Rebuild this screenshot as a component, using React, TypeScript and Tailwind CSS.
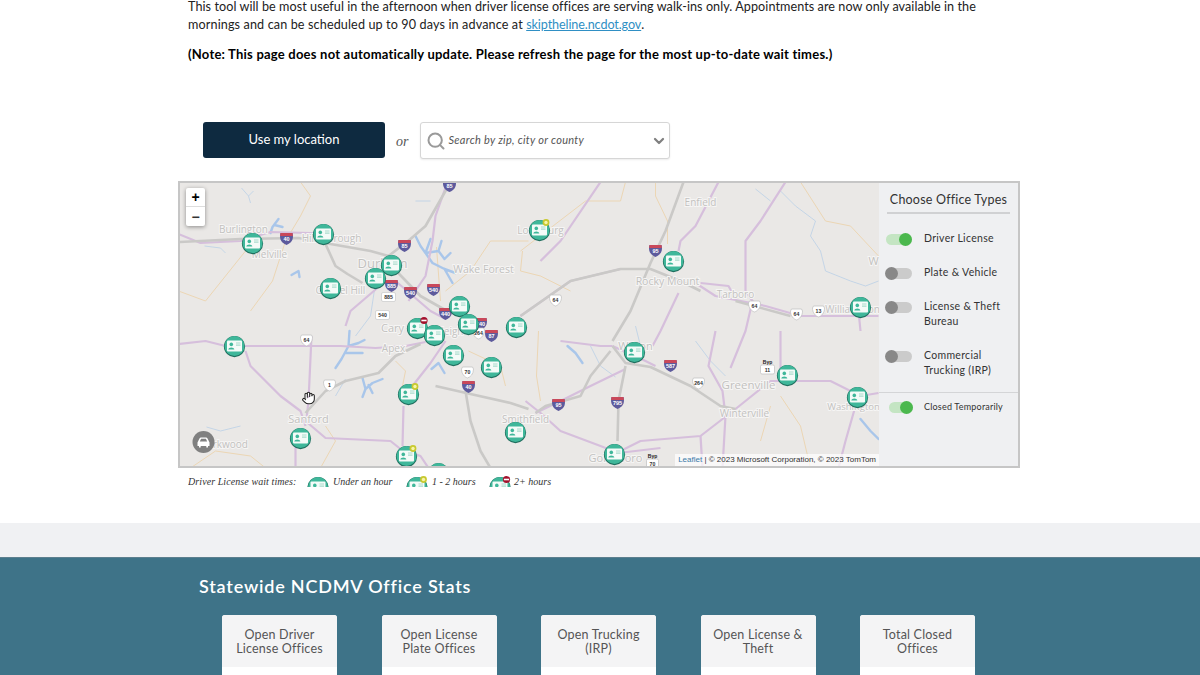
import { ChevronDown, Hand, Search } from 'lucide-react'

type Status = 'ok' | 'mid' | 'long'

const FONT = "font-['Lato','Noto_Sans',sans-serif]"

const pins: [number, number, Status][] = [
  [252, 242, 'ok'], [323, 233, 'ok'], [539, 229, 'mid'], [673, 260, 'ok'], [330, 287, 'ok'],
  [391, 264, 'ok'], [375, 277, 'ok'], [459, 305, 'ok'], [417, 327, 'long'], [468, 323, 'ok'],
  [434, 334, 'ok'], [516, 326, 'ok'], [453, 354, 'ok'], [491, 366, 'ok'], [234, 345, 'ok'],
  [408, 393, 'mid'], [634, 351, 'ok'], [787, 374, 'ok'], [860, 306, 'ok'], [857, 396, 'ok'],
  [300, 437, 'ok'], [515, 431, 'ok'], [406, 455, 'mid'], [438, 472, 'ok'], [614, 453, 'ok'],
]

const purple = [
  'M178 233 L200 242 L240 240 L270 231 L310 232 L350 237',
  'M178 343 L205 340 L225 345 L300 345 L340 345 L375 347 L405 345 L425 341',
  'M245 350 L250 365 L265 380 L280 395 L300 410 L305 425',
  'M311 335 L308 400 L306 418',
  'M305 420 L325 437 L390 440 L400 448 L420 455 L428 467',
  'M295 437 L295 467',
  'M408 390 L430 362 L445 340',
  'M403 405 L402 445',
  'M447 181 L435 215 L432 240 L425 275 L408 300',
  'M385 280 L350 310 L345 325',
  'M395 280 L430 310 L445 318',
  'M625 368 L590 385 L560 400 L535 412',
  'M525 400 L540 412 L560 430 L600 445 L618 452 L660 447',
  'M612 345 L645 360 L655 365',
  'M735 408 L770 380 L830 380 L860 395 L878 392',
  'M735 408 L700 435 L640 440 L620 450',
  'M700 435 L702 467',
  'M715 330 L708 365 L722 390 L725 415 L722 467',
  'M780 330 L780 375',
  'M855 405 L845 440 L838 467',
  'M718 181 L695 225 L680 240 L678 250',
  'M678 292 L660 330 L652 345',
  'M785 181 L760 220 L745 240 L745 290 L752 300 L745 330 L730 367',
  'M700 282 L728 285 L732 292',
  'M695 282 L715 295 L765 305 L800 315 L878 315',
  'M860 330 L858 310',
  'M520 315 L570 280 L620 268',
  'M600 181 L560 240 L540 260',
  'M560 340 L600 345 L612 345',
]

const gray = [
  'M178 241 L240 238 L298 237 L330 243 L370 250 L388 255',
  'M325 243 L335 265 L347 273 L362 282',
  'M388 255 L410 238 L425 225 L445 190 L451 181',
  'M388 262 L420 295 L450 312',
  'M305 412 L325 390 L345 380 L378 372 L395 355 L420 343',
  'M465 390 L470 420 L480 450 L490 467',
  'M435 385 L470 393 L510 402 L528 408',
  'M610 350 L590 375 L580 395 L545 405 L535 412',
  'M625 365 L618 400 L617 440',
  'M612 345 L625 362 L650 366 L690 385 L720 405 L735 408',
  'M683 181 L665 230 L650 262 L630 310 L612 340',
  'M520 315 L570 280 L620 268 L650 268 L680 280 L700 290',
  'M735 300 L790 315',
]

const orange = [
  'M520 250 L585 200 L620 200 L625 181',
  'M655 181 L655 195 L667 220 L667 243',
  'M800 181 L825 220 L850 225 L878 255',
  'M300 181 L310 195 L300 215 L285 240 L272 280 L250 310',
  'M436 246 L440 300',
  'M445 290 L470 270 L490 240 L528 240',
  'M522 250 L520 270 L540 275 L570 290',
  'M190 467 L215 450 L250 455 L265 467',
  'M320 467 L335 440 L325 425',
  'M395 360 L405 370 L402 385',
  'M468 350 L500 365 L505 385',
  'M538 330 L536 375 L540 400',
  'M780 395 L800 425 L810 467',
  'M770 405 L760 440',
  'M178 290 L205 300 L225 275 L245 250',
]

const water = [
  'M204 245 L220 247 L225 252',
  'M241 187 L248 195 L250 202 M248 195 L253 190',
  'M615 376 L600 365 L590 345',
  'M695 340 L710 360 L725 375',
  'M780 190 L795 205 L815 220 L810 235 L820 250 L825 270 L850 280 L865 285 L878 280',
  'M755 188 L770 200',
  'M635 325 L640 345',
  'M206 426 L220 430 L240 425',
  'M345 378 L335 395',
  'M375 282 L370 315 L355 335',
  'M430 200 L415 200',
]

// lakes are thin branched shapes, drawn as thick strokes
const lakes = [
  'M415 235 L420 245 L425 252 L432 262 M425 252 L430 238 M425 252 L438 250 L444 258 L450 252 M438 250 L441 240 M432 262 L444 268 L455 272 M444 268 L452 282',
  'M349 330 L348 345 L341 358 L335 367 M348 345 L358 342 L364 339 M345 352 L356 352 L362 352',
  'M362 377 L365 388 L362 396 M365 388 L372 382 L382 378 M368 384 L372 392',
  'M278 218 L272 226 L270 232 M274 224 L282 226',
  'M291 274 L298 270 L299 276',
  'M567 345 L575 352 L582 362',
  'M860 418 L870 430 L878 438',
  'M431 368 L438 362 L444 372',
]

const labels: [string, number, number, number?][] = [
  ['Burlington', 243, 232], ['Melville', 269, 257], ['Hillsborough', 331, 241], ['Durham', 382, 267, 13],
  ['Chapel Hill', 340, 293], ['Wake Forest', 483, 272, 10.5], ['Louisburg', 540, 233], ['Rocky Mount', 667, 284, 10.5],
  ['Enfield', 700, 205], ['Tarboro', 735, 297], ['Williamston', 852, 312], ['Wilson', 635, 349, 11], ['W', 873, 264, 11],
  ['Greenville', 748, 388, 11.5], ['Winterville', 744, 416], ['Washington', 853, 409, 9.5], ['Goldsboro', 615, 461, 11],
  ['Smithfield', 525, 422], ['Sanford', 308, 422, 11], ['Parkwood', 224, 447], ['Apex', 393, 351],
  ['Cary', 392, 331, 11], ['Raleigh', 446, 334],
]

const interstates: [string, number, number][] = [
  ['40', 286, 237], ['85', 404, 244], ['885', 391, 284], ['540', 410, 291], ['540', 433, 288],
  ['440', 445, 312], ['85', 449, 184], ['95', 655, 249], ['95', 558, 403], ['795', 617, 401],
  ['587', 670, 364], ['40', 468, 385], ['87', 491, 334], ['440', 480, 322],
]

const usShields: [string, number, number, boolean?][] = [
  ['885', 388, 296, true], ['540', 382, 314, true], ['64', 306, 339], ['1', 329, 384], ['70', 467, 371],
  ['264', 478, 332], ['64', 555, 299], ['64', 754, 305], ['64', 796, 313], ['13', 818, 310], ['264', 698, 382],
]

function Pin({ x, y, status }: { x: number; y: number; status: Status }) {
  return (
    <g transform={`translate(${x} ${y})`}>
      <circle r="10.6" cy="0.6" fill="#1f6e5e" />
      <circle r="10" fill="#3fb79a" />
      <rect x="-7.5" y="-5.5" width="15" height="11" rx="1" fill="#f4fbf8" />
      <circle cx="-3.2" cy="-1.6" r="1.8" fill="#3fb79a" />
      <path d="M-6.2 3.5 C-6.2 0.8 -0.2 0.8 -0.2 3.5 Z" fill="#3fb79a" />
      <path d="M1.5 -3 H6 M1.5 -0.8 H6" stroke="#a8dccc" strokeWidth="1.2" />
      {status === 'mid' && (
        <g transform="translate(6.5 -7.5)">
          <circle r="3.4" fill="#c8c92f" />
          <circle r="1.7" fill="#f7f4a8" />
        </g>
      )}
      {status === 'long' && (
        <g transform="translate(6.5 -7.5)">
          <circle r="3.6" fill="#a3102c" />
          <rect x="-2.6" y="-0.8" width="5.2" height="1.6" fill="#fff" />
        </g>
      )}
    </g>
  )
}

function MapArt() {
  return (
    <svg viewBox="179.5 182 699 284" preserveAspectRatio="xMinYMin slice" className="block h-full w-full">
      <rect x="178" y="180" width="702" height="288" fill="#eae8e6" />
      {orange.map((d) => (
        <path key={d} d={d} fill="none" stroke="#ecd6b4" strokeWidth="1" />
      ))}
      {water.map((d) => (
        <path key={d} d={d} fill="none" stroke="#bfd2e6" strokeWidth="0.9" />
      ))}
      {lakes.map((d) => (
        <path key={d} d={d} fill="none" stroke="#a9c6ea" strokeWidth="2.4" strokeLinejoin="round" strokeLinecap="round" />
      ))}
      {purple.map((d) => (
        <path key={d} d={d} fill="none" stroke="#d6bfdc" strokeWidth="2.2" strokeLinejoin="round" />
      ))}
      {gray.map((d) => (
        <path key={d} d={d} fill="none" stroke="#cac9c7" strokeWidth="2.6" strokeLinejoin="round" />
      ))}
      {labels.map(([t, x, y, size]) => (
        <text
          key={t}
          x={x}
          y={y}
          textAnchor="middle"
          fontFamily="'Open Sans', sans-serif"
          fontSize={size ?? 10}
          fill="#c2c1bf"
          stroke="#f6f5f4"
          strokeWidth="2"
          paintOrder="stroke"
        >
          {t}
        </text>
      ))}
      {interstates.map(([t, x, y]) => (
        <g key={`${t}${x}`} transform={`translate(${x} ${y})`}>
          <path d="M-6 -5 H6 C7 -1 7 4 0 7 C-7 4 -7 -1 -6 -5 Z" fill="#5d5a9c" />
          <path d="M-6 -5 H6 L6.4 -2 H-6.4 Z" fill="#c9485a" />
          <text y="3" textAnchor="middle" fontFamily="'Liberation Sans', sans-serif" fontSize="5.5" fontWeight="700" fill="#fff">
            {t}
          </text>
        </g>
      ))}
      {usShields.map(([t, x, y, square]) => (
        <g key={`${t}${x}`} transform={`translate(${x} ${y})`}>
          {square ? (
            <rect x="-7" y="-4.5" width="14" height="9" rx="1.5" fill="#fff" stroke="#c9c9c9" strokeWidth="0.7" />
          ) : (
            <path d="M-5 -5 H5 L6 -3 C6 2 3 5 0 6 C-3 5 -6 2 -6 -3 Z" fill="#fff" stroke="#bdbdbd" strokeWidth="0.7" />
          )}
          <text y="2" textAnchor="middle" fontFamily="'Liberation Sans', sans-serif" fontSize="5.2" fontWeight="700" fill="#333">
            {t}
          </text>
        </g>
      ))}
      <g transform="translate(767 364)">
        <text y="-1" textAnchor="middle" fontFamily="'Liberation Sans', sans-serif" fontSize="5" fontWeight="700" fill="#222">Byp</text>
        <rect x="-7" y="0" width="14" height="9" rx="1.5" fill="#fff" stroke="#bdbdbd" strokeWidth="0.7" />
        <text y="7" textAnchor="middle" fontFamily="'Liberation Sans', sans-serif" fontSize="5.2" fontWeight="700" fill="#333">11</text>
      </g>
      <g transform="translate(652 458)">
        <text y="-1" textAnchor="middle" fontFamily="'Liberation Sans', sans-serif" fontSize="5" fontWeight="700" fill="#222">Byp</text>
        <rect x="-6" y="0" width="12" height="9" rx="1.5" fill="#fff" stroke="#bdbdbd" strokeWidth="0.7" />
        <text y="7" textAnchor="middle" fontFamily="'Liberation Sans', sans-serif" fontSize="5.2" fontWeight="700" fill="#333">70</text>
      </g>
      {pins.map(([x, y, s]) => (
        <Pin key={`${x}-${y}`} x={x} y={y} status={s} />
      ))}
      <circle cx="203" cy="441" r="11" fill="#808080" />
      {/* car */}
      <path
        d="M197 445 V441.5 L199 437.5 C199.3 436.8 199.8 436.5 200.5 436.5 H205.5 C206.2 436.5 206.7 436.8 207 437.5 L209 441.5 V445 H207.5 V446.5 H205.8 V445 H200.2 V446.5 H198.5 V445 Z"
        fill="#fff"
      />
      <path d="M199.3 440.6 L200.6 437.8 H205.4 L206.7 440.6 Z" fill="#808080" />
      <Hand x={301} y={390} width={14} height={14} stroke="#222" fill="#fff" strokeWidth={1.8} />
    </svg>
  )
}

function Toggle({ on, small }: { on?: boolean; small?: boolean }) {
  return (
    <div className={`relative h-[11px] shrink-0 rounded-full ${small ? 'ml-[10px] w-[24px]' : 'ml-[7px] w-[26px]'} ${on ? 'bg-[#c4e5c3]' : 'bg-[#cbcbcb]'}`}>
      <div
        className={`absolute top-[-1px] h-[13px] w-[13px] rounded-full ${on ? 'right-0 bg-[#4bb84e]' : 'left-[-1px] bg-[#888888]'}`}
      />
    </div>
  )
}

function OfficeType({ label, on, className }: { label: React.ReactNode; on?: boolean; className: string }) {
  return (
    <div className={`flex items-start ${className}`}>
      <div className="mt-[3px]">
        <Toggle on={on} />
      </div>
      <span className="ml-[12px] text-[10.5px] leading-[15px] tracking-[0.3px] text-[#333]">{label}</span>
    </div>
  )
}

function LegendPin({ status }: { status: Status }) {
  return (
    <svg viewBox="-12 -12 24 24" className="mt-[7px] block h-[24px] w-[24px] shrink-0">
      <Pin x={0} y={0} status={status} />
    </svg>
  )
}

function StatCard({ title }: { title: React.ReactNode }) {
  return (
    <div className="h-[80px] w-[115px] shrink-0 overflow-hidden rounded-[3px] bg-white">
      <div className="h-[52px] bg-[#f4f4f5] pt-[13px] text-center text-[12.5px] leading-[14px] tracking-[0.2px] text-[#555]">
        {title}
      </div>
    </div>
  )
}

export default function App() {
  return (
    <div className={`h-[675px] w-[1200px] overflow-hidden bg-white ${FONT}`}>
      <div className="h-[523px] overflow-hidden">
        <div className="-mt-[2px] ml-[188px] w-[830px] text-[12.6px] leading-[18px] tracking-[0.07px] text-[#222]">
          <p>
            This tool will be most useful in the afternoon when driver license offices are serving walk-ins only. Appointments are now only available in the
            <br />
            <span className="tracking-[0.13px]">
              mornings and can be scheduled up to 90 days in advance at{' '}
              <a className="tracking-[-0.1px] text-[#2f8fc4] underline">skiptheline.ncdot.gov</a>.
            </span>
          </p>
          <p className="mt-[11px] text-[13px] font-bold tracking-[0.22px] text-black">
            (Note: This page does not automatically update. Please refresh the page for the most up-to-date wait times.)
          </p>
        </div>

        <div className="ml-[203px] mt-[59px] flex items-start">
          <button className="h-[36px] w-[182px] rounded-[3px] bg-[#0e2a40] text-[13px] text-white">
            Use my location
          </button>
          <span className="ml-[11px] mt-[9px] font-['Liberation_Serif',serif] text-[14px] italic text-[#555]">or</span>
          <div className="ml-[12px] flex h-[37px] w-[250px] items-center rounded-[3px] border border-[#d6d6d6] bg-white pl-[5px] pr-[2px] shadow-[0_1px_2px_rgba(0,0,0,0.08)]">
            <Search className="h-[20px] w-[20px] text-[#9a9a9a]" strokeWidth={2.4} />
            <span className="ml-[2px] flex-1 text-[11px] italic tracking-[0.3px] text-[#555]">Search by zip, city or county</span>
            <ChevronDown className="h-[16px] w-[16px] text-[#808080]" strokeWidth={3.4} />
          </div>
        </div>

        <div className="ml-[178px] mt-[22px] flex h-[287px] w-[842px] border-2 border-[#c6c6c6]">
          <div className="relative h-full w-[699px] shrink-0 overflow-hidden">
            <MapArt />
            <div className="absolute left-[6px] top-[5px] w-[19px] overflow-hidden rounded-[2px] bg-white font-['Liberation_Sans',sans-serif] shadow-[0_1px_4px_rgba(0,0,0,0.4)]">
              <div className="flex h-[19px] items-center justify-center border-b border-[#ddd] text-[14px] font-bold leading-none text-black">+</div>
              <div className="flex h-[19px] items-center justify-center text-[14px] font-bold leading-none text-[#333]">−</div>
            </div>
            <div className="absolute bottom-0 right-0 bg-white/70 px-[3px] font-['Liberation_Sans',sans-serif] text-[8px] leading-[12px] text-[#333]">
              <span className="text-[#3a7ba8]">Leaflet</span> | © 2023 Microsoft Corporation, © 2023 TomTom
            </div>
          </div>
          <div className="flex-1 bg-[#eff0f2]">
            <div className="mx-[8px] mt-[8px] border-b-2 border-[#d0d1d3] pb-[4px] text-center text-[12.5px] leading-[17px] tracking-[0.2px] text-[#333]">
              Choose Office Types
            </div>
            <OfficeType label="Driver License" on className="mt-[17px]" />
            <OfficeType label="Plate & Vehicle" className="mt-[19px]" />
            <OfficeType label={<>License &amp; Theft<br />Bureau</>} className="mt-[19px]" />
            <OfficeType label={<>Commercial<br />Trucking (IRP)</>} className="mt-[19px]" />
            <div className="mt-[14px] flex items-center border-t border-[#d4d5d7] pt-[8px]">
              <Toggle on small />
              <span className="ml-[11px] text-[9px] leading-[12px] tracking-[0.2px] text-[#333]">Closed Temporarily</span>
            </div>
          </div>
        </div>

        <div className="ml-[188px] flex h-[19px] items-start overflow-hidden font-['Liberation_Serif',serif] text-[10px] italic leading-[12px] text-[#333]">
          <span className="mt-[8px] w-[118px] tracking-[0.08px]">Driver License wait times:</span>
          <LegendPin status="ok" />
          <span className="ml-[3px] mt-[8px] w-[72px]">Under an hour</span>
          <LegendPin status="mid" />
          <span className="ml-[3px] mt-[8px] w-[56px]">1 - 2 hours</span>
          <LegendPin status="long" />
          <span className="ml-[2px] mt-[8px]">2+ hours</span>
        </div>
      </div>

      <div className="h-[34px] bg-[#f0f1f3]" />

      <div className="h-[118px] border-t border-[#5c7f8e] bg-[#3e7388] pl-[199px]">
        <h2 className="pt-[17px] text-[18px] font-semibold leading-[22px] tracking-[0.8px] text-white">
          Statewide NCDMV Office Stats
        </h2>
        <div className="ml-[23px] mt-[18px] flex gap-[44.5px]">
          <StatCard title={<>Open Driver<br />License Offices</>} />
          <StatCard title={<>Open License<br />Plate Offices</>} />
          <StatCard title={<>Open Trucking<br />(IRP)</>} />
          <StatCard title={<>Open License &amp;<br />Theft</>} />
          <StatCard title={<>Total Closed<br />Offices</>} />
        </div>
      </div>
    </div>
  )
}
